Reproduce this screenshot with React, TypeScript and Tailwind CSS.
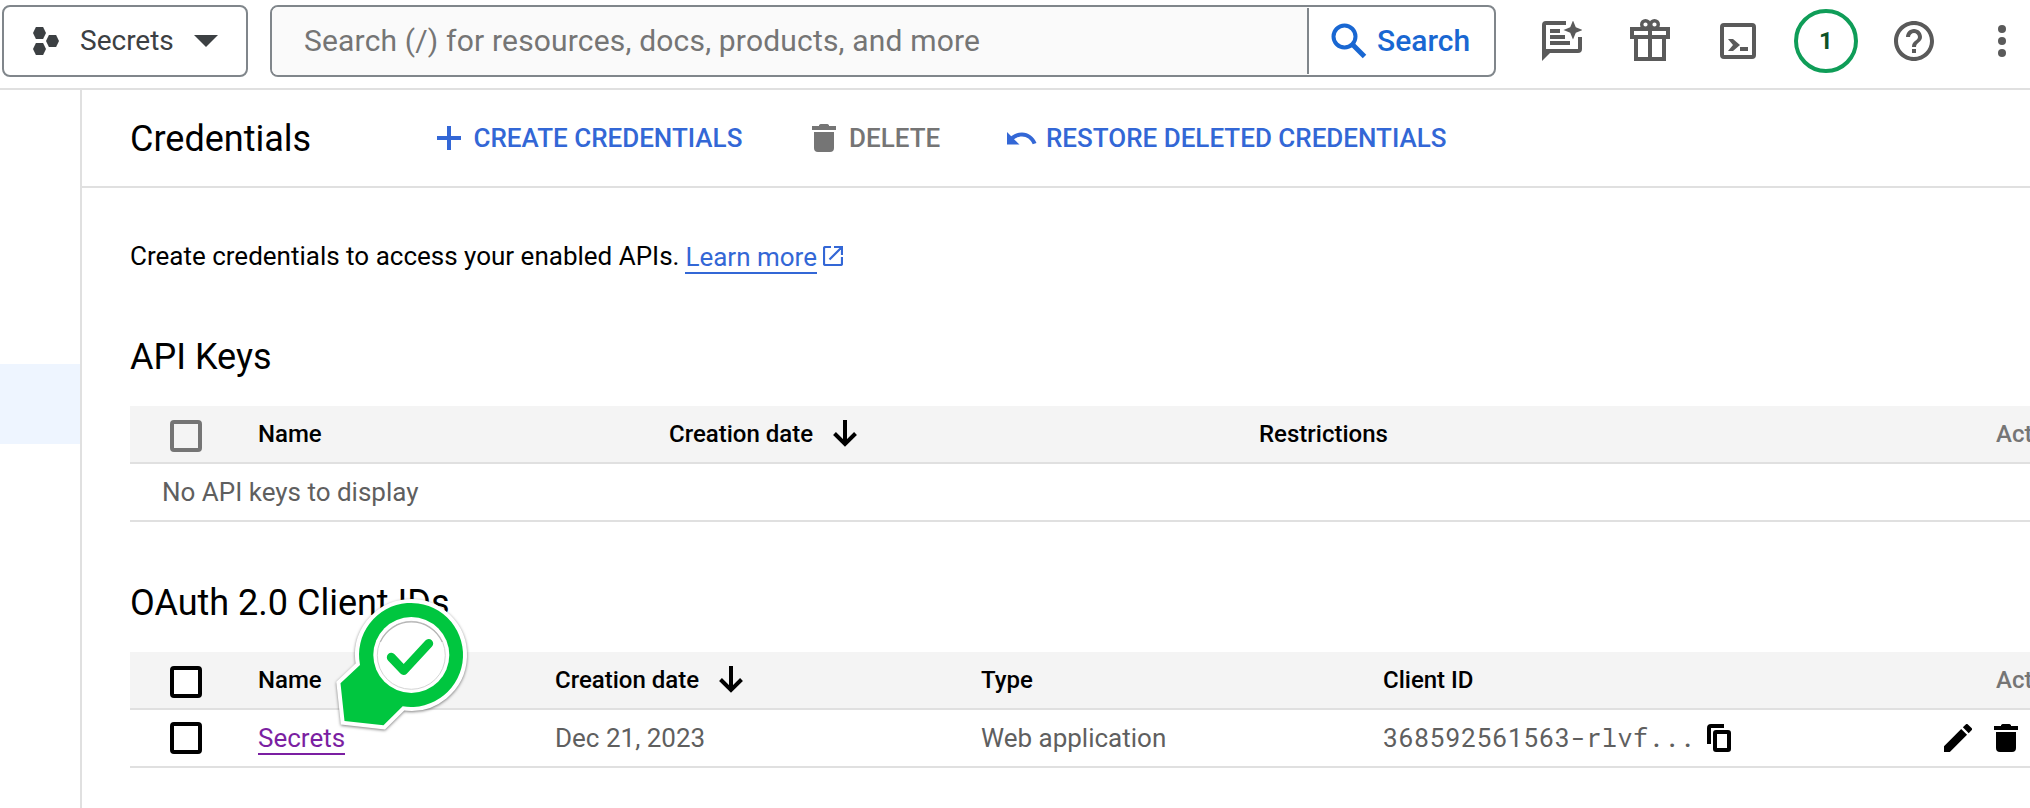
import React from "react";

const HEX = (cx: number, cy: number) =>
  `${cx - 6.5},${cy} ${cx - 3.6},${cy - 6} ${cx + 3.6},${cy - 6} ${cx + 6.5},${cy} ${cx + 3.6},${cy + 6} ${cx - 3.6},${cy + 6}`;

function ProjectIcon() {
  return (
    <svg width="28" height="30" viewBox="0 0 28 30" fill="#3c4043">
      <polygon points={HEX(7.5, 7)} />
      <polygon points={HEX(7.5, 23)} />
      <polygon points={HEX(20.5, 15)} />
    </svg>
  );
}

function ChatSparkIcon() {
  return (
    <svg width="40" height="40" viewBox="0 0 40 40" fill="#5a5a5a">
      <path d="M4 0h20v4H4v24h32V16h4v12a4 4 0 0 1-4 4H8l-8 8V4a4 4 0 0 1 4-4z" />
      <path d="M8 8h10v4H8zM8 14h15v4H8zM8 20h20v4H8z" />
      <path d="M31 -0.500l2.800 6.700L40.500 9l-6.700 2.800L31 18.500l-2.800-6.700L21.500 9l6.700-2.800z" />
    </svg>
  );
}

function GiftIcon() {
  return (
    <svg width="40" height="42" viewBox="0 0 40 42" fill="none" stroke="#5a5a5a" strokeWidth="4">
      <path d="M2 10h36v8H2zM6 18v22h28V18M20 10v30" />
      <circle cx="15.500" cy="5.500" r="3.800" strokeWidth="3.400" />
      <circle cx="24.500" cy="5.500" r="3.800" strokeWidth="3.400" />
    </svg>
  );
}

function TerminalIcon() {
  return (
    <svg width="36" height="36" viewBox="0 0 36 36">
      <rect x="2" y="2" width="32" height="32" rx="2" fill="none" stroke="#5a5a5a" strokeWidth="4" />
      <path d="M8 16h5l7 6-7 6H8l5-6z" fill="#5a5a5a" />
      <path d="M20 24h8v4h-8z" fill="#5a5a5a" />
    </svg>
  );
}

function HelpIcon() {
  return (
    <svg width="40" height="40" viewBox="2 2 20 20" fill="#5a5a5a">
      <path d="M11 18h2v-2h-2v2zm1-16C6.480 2 2 6.480 2 12s4.480 10 10 10 10-4.480 10-10S17.520 2 12 2zm0 18c-4.410 0-8-3.590-8-8s3.590-8 8-8 8 3.590 8 8-3.590 8-8 8zm0-14c-2.210 0-4 1.790-4 4h2c0-1.100.9-2 2-2s2 .9 2 2c0 2-3 1.750-3 5h2c0-2.250 3-2.500 3-5 0-2.210-1.790-4-4-4z" />
    </svg>
  );
}

function TrashIcon({ className }: { className?: string }) {
  return (
    <svg width="24" height="28" viewBox="0 0 24 28" fill="currentColor" className={`shrink-0 ${className ?? ""}`}>
      <path d="M7 1l1.500-1h7L17 1v1h7v4H0V2h7zM2 8h20v16a4 4 0 0 1-4 4H6a4 4 0 0 1-4-4z" />
    </svg>
  );
}

function SortArrow() {
  return (
    <svg width="24" height="28" viewBox="0 0 24 28" fill="none" stroke="#000" strokeWidth="4">
      <path d="M12 0v24M1.500 13.500L12 24l10.500-10.500" />
    </svg>
  );
}

function Checkbox({ muted }: { muted?: boolean }) {
  return (
    <span
      className={`block h-8 w-8 shrink-0 rounded-[4px] border-4 ${muted ? "border-[#757575]" : "border-black bg-white"}`}
    />
  );
}

function Pin() {
  const outline = "M360 665L340.500 683.300L344.500 721L383.500 725.300L402.700 706.300A52 52 0 1 0 360 665Z";
  return (
    <svg
      width="150"
      height="150"
      viewBox="330 590 150 150"
      className="absolute left-[330px] top-[590px] drop-shadow-[0_1px_1.5px_rgba(0,0,0,0.5)]"
    >
      <path d={outline} fill="#fff" stroke="#fff" strokeWidth="8" />
      <path d={outline} fill="#00c63f" />
      <circle cx="411.300" cy="655" r="38" fill="#fff" />
      <circle cx="411.300" cy="655.300" r="34" fill="none" stroke="#d4d4d4" strokeWidth="1" />
      <path d="M380.300 642A34 34 0 0 1 442.300 642" fill="none" stroke="#b4b4b4" strokeWidth="1.200" />
      <path
        d="M391.300 657.300L403.700 670.500L428.700 643.500"
        fill="none"
        stroke="#00c63f"
        strokeWidth="9"
        strokeLinecap="round"
        strokeLinejoin="round"
      />
    </svg>
  );
}

function TopBar() {
  return (
    <header className="flex h-[90px] shrink-0 items-start border-b-2 border-[#e0e0e0] pl-[2px] pt-[5px]">
      <button className="flex h-[72px] w-[246px] shrink-0 items-center rounded-[8px] border-2 border-[#80868b] pl-[28px] text-[28px] text-[#3c4043]">
        <ProjectIcon />
        <span className="ml-[20px] w-[114px] text-left">Secrets</span>
        <svg width="24" height="12" viewBox="0 0 24 12">
          <path d="M0 0h24L12 12z" fill="#3c4043" />
        </svg>
      </button>
      <div className="ml-[22px] flex h-[72px] w-[1226px] shrink-0 items-center overflow-hidden rounded-[8px] border-2 border-[#80868b]">
        <div className="flex h-full w-[1035px] items-center bg-[#fafafa] pb-[2px] pl-[32px] text-[30px] tracking-[0.18px] text-[#757575]">
          Search (/) for resources, docs, products, and more
        </div>
        <div className="h-[66px] w-[2px] bg-[#80868b]" />
        <button className="flex flex-1 items-center pl-[22px] text-[30px] font-medium text-[#1967d2]">
          <svg width="36" height="36" viewBox="0 0 36 36" fill="none" stroke="#1967d2" strokeWidth="4">
            <circle cx="13.500" cy="13.500" r="11" />
            <path d="M21.500 21.500L33.500 33.500" strokeWidth="5" />
          </svg>
          <span className="ml-[10px] pb-[2px]">Search</span>
        </button>
      </div>
      <div className="flex h-[72px] items-center">
        <span className="ml-[46px]"><ChatSparkIcon /></span>
        <span className="ml-[48px] -mt-[2px]"><GiftIcon /></span>
        <span className="ml-[50px]"><TerminalIcon /></span>
        <span className="ml-[38px] flex h-16 w-16 items-center justify-center rounded-full border-4 border-[#0f9d58] text-[24px] font-bold text-[#0d5226]">
          1
        </span>
        <span className="ml-[36px]"><HelpIcon /></span>
        <svg width="8" height="32" viewBox="0 0 8 32" fill="#5a5a5a" className="ml-[64px]">
          <circle cx="4" cy="4" r="4" />
          <circle cx="4" cy="16" r="4" />
          <circle cx="4" cy="28" r="4" />
        </svg>
      </div>
    </header>
  );
}

function ActionBar() {
  return (
    <div className="flex h-[98px] items-center border-b-2 border-[#e0e0e0] pl-[48px] text-[26px] font-medium">
      <h1 className="w-[307px] pt-[1px] text-[36px] font-normal text-black">Credentials</h1>
      <button className="flex w-[375px] items-center text-[#3367d6]">
        <svg width="24" height="24" viewBox="0 0 24 24" fill="#3367d6">
          <path d="M10 0h4v10h10v4H14v10h-4V14H0v-4h10z" />
        </svg>
        <span className="ml-[12.500px]">CREATE CREDENTIALS</span>
      </button>
      <button className="flex w-[195px] items-center text-[#757575]">
        <TrashIcon />
        <span className="ml-[13px]">DELETE</span>
      </button>
      <button className="flex items-center text-[#3367d6]">
        <svg width="30" height="14" viewBox="0 0 30 14">
          <path d="M0 1l4.200 4.200C7.500 2.700 11 1.500 15 1.500c6.500 0 12 4.500 14.500 10.500l-3.800 1.300C23.800 8.500 19.800 5.500 15 5.500c-3 0-5.500 1-8 2.700L12.500 13.500H0z" fill="#3367d6" />
        </svg>
        <span className="ml-[9px]">RESTORE DELETED CREDENTIALS</span>
      </button>
    </div>
  );
}

export default function App() {
  return (
    <div
      className="relative flex h-[808px] w-[2030px] flex-col overflow-hidden bg-white text-black"
      style={{ fontFamily: 'Roboto, "Liberation Sans", sans-serif' }}
    >
      <TopBar />
      <div className="flex flex-1">
        <aside className="w-[82px] shrink-0 border-r-2 border-[#e0e0e0] pt-[274px]">
          <div className="h-[80px] bg-[#eef5ff]" />
        </aside>
        <main className="min-w-0 flex-1 overflow-hidden whitespace-nowrap">
          <ActionBar />
          <div className="pl-[48px] text-[26px]">
            <p className="mt-[48px] flex h-[40px] items-center leading-[36px]">
              <span>Create credentials to access your enabled APIs.</span>
              <a className="ml-[6px] border-b-2 border-[#3367d6] pt-[3px] leading-[30px] text-[#3367d6]">Learn more</a>
              <svg width="20" height="20" viewBox="0 0 20 20" fill="none" stroke="#3367d6" strokeWidth="2.200" className="ml-[6px]">
                <path d="M8 1H2.500Q1 1 1 2.500V17.500Q1 19 2.500 19H17.500Q19 19 19 17.500V11M11 1H19V9M19 1L6.500 13.500" />
              </svg>
            </p>

            <h2 className="mt-[59px] flex h-[44px] items-center text-[36px]">API Keys</h2>
            <section className="mt-[27px]">
              <div className="flex h-[58px] items-center border-b-2 border-[#e0e0e0] bg-[#f4f4f4] pl-[40px] text-[24px] font-medium">
                <span className="mt-[4px]"><Checkbox muted /></span>
                <span className="ml-[56px] w-[411px] shrink-0">Name</span>
                <span className="flex w-[590px] shrink-0 items-center gap-[20px]">Creation date<SortArrow /></span>
                <span className="w-[737px] shrink-0">Restrictions</span>
                <span className="text-[#757575]">Actions</span>
              </div>
              <div className="flex h-[58px] items-center border-b-2 border-[#e0e0e0] pl-[32px] text-[#5f5f5f]">
                No API keys to display
              </div>
            </section>

            <h2 className="mt-[59px] flex h-[44px] items-center text-[36px]">OAuth 2.0 Client IDs</h2>
            <section className="mt-[27px]">
              <div className="flex h-[58px] items-center border-b-2 border-[#e0e0e0] bg-[#f4f4f4] pl-[40px] text-[24px] font-medium">
                <span className="mt-[4px]"><Checkbox /></span>
                <span className="ml-[56px] w-[297px] shrink-0">Name</span>
                <span className="flex w-[426px] shrink-0 items-center gap-[20px]">Creation date<SortArrow /></span>
                <span className="w-[402px] shrink-0">Type</span>
                <span className="w-[613px] shrink-0">Client ID</span>
                <span className="text-[#757575]">Actions</span>
              </div>
              <div className="flex h-[58px] items-center border-b-2 border-[#e0e0e0] pl-[40px] text-[#5f5f5f]">
                <Checkbox />
                <span className="ml-[56px] w-[297px] shrink-0">
                  <a className="inline-block border-b-2 border-[#7b1fa2] leading-[29px] text-[#7b1fa2]">Secrets</a>
                </span>
                <span className="w-[426px] shrink-0">Dec 21, 2023</span>
                <span className="w-[402px] shrink-0">Web application</span>
                <span className="flex w-[324px] shrink-0 items-baseline">
                  <span className="tracking-[1px]">368592561563</span>
                  <span className="font-[Roboto_Mono,Liberation_Mono,monospace] text-[26px]">-rlvf...</span>
                </span>
                <svg width="24" height="28" viewBox="0 0 24 28" fill="none" stroke="#000" strokeWidth="4" className="shrink-0">
                  <path d="M2 20V4Q2 2 4 2H17" />
                  <rect x="8" y="8" width="14" height="18" rx="1" />
                </svg>
                <svg width="28" height="28" viewBox="3 3 18 18" fill="#000" className="ml-[213px] shrink-0">
                  <path d="M3 17.250V21h3.750L17.810 9.940l-3.750-3.750L3 17.250zM20.710 7.040a1 1 0 0 0 0-1.410l-2.340-2.340a1 1 0 0 0-1.410 0l-1.830 1.830 3.750 3.750 1.830-1.830z" />
                </svg>
                <TrashIcon className="ml-[22px] text-black" />
              </div>
            </section>
          </div>
        </main>
      </div>
      <Pin />
    </div>
  );
}
